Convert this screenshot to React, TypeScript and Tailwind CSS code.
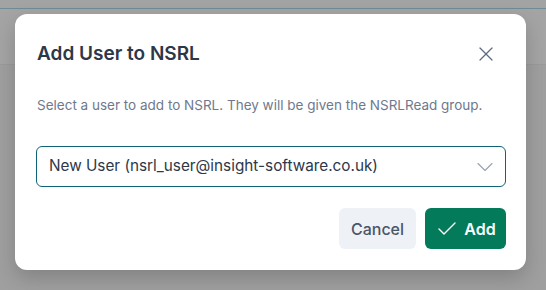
import { Check, ChevronDown, X } from "lucide-react"

const Backdrop = () => {
    return (
        <div className="absolute inset-0 flex flex-col bg-[#9f9f9f]">
            <div className="h-[8px] bg-[#a3a3a3]" />
            <div className="h-px bg-[#6e8c94]" />
            <div className="h-[56px] bg-[#a4a4a4] border-b border-[#9a9a9a]" />
            <div className="flex-1" />
        </div>
    )
}

const AddUserDialog = () => {
    return (
        <div className="relative ml-[15px] mr-[20px] mt-[14px] h-[256px] rounded-[12px] bg-white shadow-[0_8px_20px_rgba(0,0,0,0.18)] px-[21px] pr-[20px] pt-[24px]">
            <div className="flex items-center justify-between">
                <h2 className="text-[19px] leading-[32px] font-semibold text-[#2d3748] pl-px">Add User to NSRL</h2>
                <button className="mr-[8px] text-[#5f6b7e]">
                    <X size={24} strokeWidth={1.2} />
                </button>
            </div>
            <p className="mt-[25px] pl-px text-[13.5px] leading-[20px] text-[#6f798b]">
                Select a user to add to NSRL. They will be given the NSRLRead group.
            </p>
            <div className="mt-[31px] flex h-[41px] items-center justify-between rounded-[6px] border border-[#0e6474] pl-[12px] pr-[6px]">
                <span className="text-[15.3px] text-[#2d3748]">New User (nsrl_user@insight-software.co.uk)</span>
                <ChevronDown size={28} strokeWidth={1} className="text-[#9aa3b2]" />
            </div>
            <div className="mt-[21px] flex justify-end gap-[9px]">
                <button className="h-[41px] w-[77px] rounded-[6px] bg-[#eef2f7] text-[16px] font-medium text-[#4a5568]">
                    Cancel
                </button>
                <button className="flex h-[41px] w-[81px] items-center justify-center gap-[5px] rounded-[6px] bg-[#037a5a] text-[16px] font-semibold text-white">
                    <Check size={24} strokeWidth={1.4} />
                    Add
                </button>
            </div>
        </div>
    )
}

const App = () => {
    return (
        <div className="relative h-[290px] w-[546px] overflow-hidden font-['Inter',sans-serif]">
            <Backdrop />
            <div className="relative">
                <AddUserDialog />
            </div>
        </div>
    )
}

export default App
